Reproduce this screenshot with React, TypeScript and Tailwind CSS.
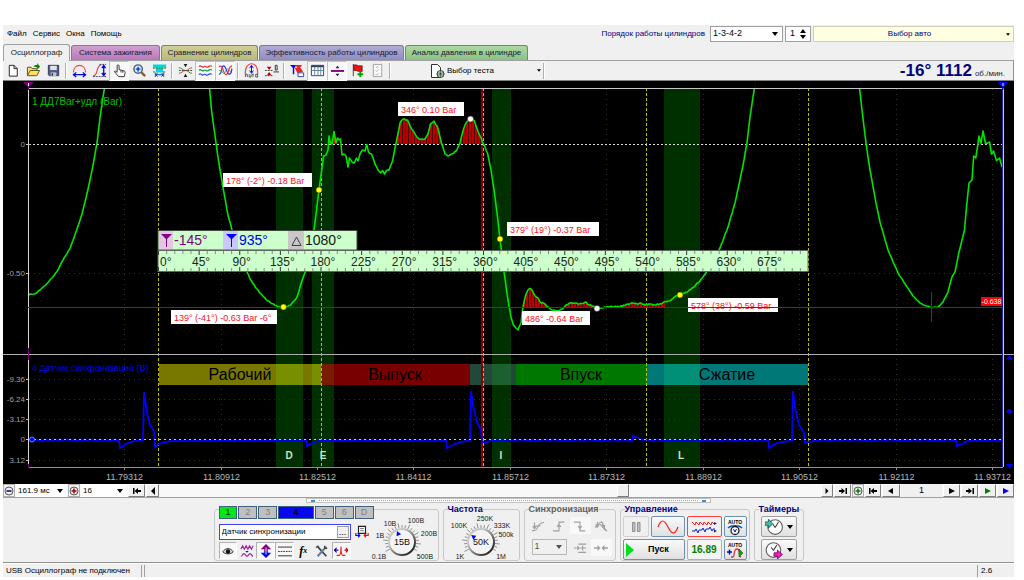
import type { ReactNode } from "react";

type Point = [number, number];

type Marker = {
  text: string;
  x: number;
  y: number;
  w: number;
};

// Pressure trace, three visible pieces
const pressureLeft: Point[] = [
  [28, 295.5], [30, 294], [34, 294], [37, 292.5], [42, 288], [47, 283.5], [52, 278], [57, 271.5], [63, 260], [70, 248.5],
  [76, 232], [82, 214], [86, 198], [90, 180], [94, 160], [97, 143], [100, 118], [102.5, 100], [104.5, 88],
];

const pressureMain: Point[] = [
  [209.5, 88], [211.5, 110], [216, 143], [220, 170], [224, 193], [228, 215], [232, 230], [238, 250], [247, 272], [250, 279],
  [257, 289], [262, 295], [266, 299.5], [270, 302], [275, 305.5], [280, 307.5], [286, 307.5], [290, 305.5], [294, 301],
  [297, 297], [300, 287], [303, 278], [305, 272], [310, 253], [314, 230], [316.5, 210], [319, 190], [321, 175],
  [322, 168], [323.5, 156], [326, 155], [328, 150], [329, 136], [330.5, 143], [332, 144], [334, 131.5], [336, 143],
  [337.5, 138], [339, 140], [340.5, 139], [342, 155], [344, 154], [346, 156], [348, 167], [349.5, 158], [352, 162],
  [354, 163], [356.5, 158], [358, 161], [360, 154], [362.5, 150], [365, 151], [366.7, 144.5], [368.5, 152], [371.5, 154],
  [375, 164], [378, 170], [380.5, 173], [382.5, 170.5], [384.5, 174], [386.5, 170.5], [389, 170], [392.5, 161],
  [395, 148], [397.5, 136], [400, 123], [403, 119], [407.5, 120], [411, 128], [414, 132], [417, 137], [420.5, 139.5],
  [425, 139], [428, 134], [430.5, 124], [434, 121], [437.5, 127], [441.5, 143], [445, 154], [448, 156], [452, 154],
  [456, 151], [460, 143], [463.5, 129], [466.5, 122], [470.5, 119], [474.5, 121], [477.5, 130], [483.5, 144],
  [487.5, 153], [491, 170], [495, 197], [497.5, 217], [500, 239], [504, 272], [508, 300], [511, 317], [513, 324],
  [516, 328], [518, 330], [519.5, 326], [521, 323], [522.5, 310], [524, 302], [526, 294], [528, 290], [530.5, 288.5],
  [533, 292], [535, 296], [538, 298], [541, 303], [544, 303.5], [548, 307], [552, 310], [558, 311], [562, 309],
  [565, 306], [570, 303], [574, 303], [578, 304], [582, 303.5], [586, 302], [589, 305], [593, 306], [597, 308],
  [602, 308], [608, 306.5], [614, 307], [620, 306.5], [626, 304.5], [633, 303], [637, 304], [641, 303], [645, 305],
  [650, 304], [655, 305], [661, 304], [665, 301.5], [669, 301], [673, 298.5], [676, 296], [680, 295], [687, 292],
  [693, 287.5], [700, 281], [706, 273], [720, 248], [728, 227], [735, 203], [740.5, 177], [744, 160], [747, 143],
  [750, 117], [754.5, 88],
];

const pressureRight: Point[] = [
  [859.5, 88], [862, 110], [866, 143], [870, 170], [876, 203], [880, 222], [888, 250], [898, 273], [907, 287],
  [913, 296], [920, 303], [925, 305.5], [932, 307.5], [938, 307], [943, 302], [948, 292], [952, 277], [955, 272],
  [959, 252], [962, 240], [964.5, 230], [966.5, 207], [969, 183], [972, 180], [973.7, 156], [975.7, 158], [977.5, 147],
  [979, 136], [981, 143.5], [983, 131], [985.5, 143.5], [989.5, 142], [991.5, 154], [993.5, 151], [996.5, 160.5],
  [999.5, 158], [1002, 167],
];

// Synchronisation sensor trace
const syncTrace: Point[] = [
  [32, 440], [119, 440], [120, 448], [125, 444.5], [132, 441.5], [143, 440], [144, 392], [147, 413], [150, 425],
  [154, 432], [155, 447], [160, 443.5], [170, 441], [306, 440], [307, 446], [313, 442.5], [320, 440.5], [446, 440],
  [447, 448], [455, 443.5], [470, 440], [471, 391], [473, 405], [477, 422], [481, 430], [482, 442.5], [489, 441.5],
  [492, 440], [632, 440], [633, 436], [639, 438.5], [645, 440], [768.5, 440], [769, 448], [777, 443], [792, 440],
  [793, 391], [795.5, 410], [799, 425], [804, 433], [805, 442.5], [813, 441], [820, 440], [956, 440], [957, 446],
  [964, 442.5], [970, 440.5], [1002, 440],
];

const markers: Marker[] = [
  { text: "346° 0.10 Bar", x: 398, y: 102, w: 66 },
  { text: "178° (-2°) -0.18 Bar", x: 223, y: 173, w: 89 },
  { text: "379° (19°) -0.37 Bar", x: 507, y: 222, w: 92 },
  { text: "139° (-41°) -0.63 Bar -6°", x: 171, y: 310, w: 106 },
  { text: "486° -0.64 Bar", x: 522, y: 311, w: 68 },
  { text: "578° (38°) -0.59 Bar", x: 688, y: 298, w: 90 },
];

const bands = [
  { x: 276, w: 27, name: "D", at: 289 },
  { x: 312, w: 22, name: "E", at: 323 },
  { x: 492, w: 19, name: "I", at: 501 },
  { x: 664, w: 36, name: "L", at: 681 },
];

const phases = [
  { x: 159, w: 162, fill: "#787800", name: "Рабочий", at: 240 },
  { x: 321, w: 149, fill: "#780000", name: "Выпуск", at: 395 },
  { x: 470, w: 46, fill: "#23483a", name: "", at: 0 },
  { x: 516, w: 131, fill: "#007800", name: "Впуск", at: 581 },
  { x: 647, w: 161, fill: "#007878", name: "Сжатие", at: 727 },
];

const overlaps = [
  { x: 276, w: 27, fill: "#789000" },
  { x: 312, w: 9, fill: "#789000" },
  { x: 321, w: 13, fill: "#781c00" },
  { x: 492, w: 19, fill: "#1c6030" },
  { x: 664, w: 36, fill: "#009078" },
];

const gridX = [124.5, 221.5, 317.5, 413.5, 510.5, 606.5, 703.5, 799.5, 896.5, 992.5];
const times = ["11.79312", "11.80912", "11.82512", "11.84112", "11.85712", "11.87312", "11.88912", "11.90512", "11.92112", "11.93712"];
const cycleX = [158.5, 321.5, 483.5, 646.5, 808.5];
const syncScale = [
  { label: "-9.36", y: 379 },
  { label: "-6.24", y: 399 },
  { label: "-3.12", y: 419 },
  { label: "0", y: 439 },
  { label: "3.12", y: 460 },
];

const toPath = (pts: Point[]) => pts.map(([x, y]) => `${x},${y}`).join(" ");

// Small repeatable ripple so that the lines look like sampled data
const ripple = (pts: Point[], amp: number, step: number): Point[] => {
  const out: Point[] = [];
  pts.forEach((p, i) => {
    out.push(p);
    const next = pts[i + 1];
    if (!next) return;
    const n = Math.floor((next[0] - p[0]) / step);
    for (let k = 1; k < n; k++) {
      const t = k / n;
      const noise = (((i * 37 + k * 61) % 17) / 8 - 1) * amp;
      out.push([p[0] + (next[0] - p[0]) * t, p[1] + (next[1] - p[1]) * t + noise]);
    }
  });
  return out;
};

// Area between the trace and a level, for x within the range
const area = (from: number, to: number, level: number) => {
  const pts = pressureMain.filter(([x, y]) => x >= from && x <= to && y <= level);
  return `${from},${level} ${toPath(pts)} ${to},${level}`;
};

function Chart() {
  return (
    <svg viewBox="3 81 1011 403" className="block h-auto w-full bg-black font-['Liberation_Sans',sans-serif]" role="img" aria-label="Осциллограмма">
      <defs>
        <pattern id="hatch" width="3" height="8" patternUnits="userSpaceOnUse">
          <rect width="3" height="8" fill="#b80000" />
          <rect width="1" height="8" fill="#500000" />
        </pattern>
      </defs>

      {bands.map((b) => (
        <rect key={b.name} x={b.x} y="89" width={b.w} height="378" fill="#003000" />
      ))}
      {gridX.map((x) => (
        <line key={x} x1={x} x2={x} y1="89" y2="467" stroke="#303010" strokeDasharray="1 4" />
      ))}
      <line x1="29" x2="1002" y1="273.5" y2="273.5" stroke="#303010" strokeDasharray="1 4" />
      {syncScale.map((s) => (
        <line key={s.label} x1="29" x2="1002" y1={s.y + 0.5} y2={s.y + 0.5} stroke="#303010" strokeDasharray="1 4" />
      ))}

      {/* phases of the cycle */}
      {phases.map((p) => (
        <rect key={p.x} x={p.x} y="364" width={p.w} height="21" fill={p.fill} />
      ))}
      {overlaps.map((o) => (
        <rect key={o.x} x={o.x} y="364" width={o.w} height="21" fill={o.fill} />
      ))}
      {phases.map((p) => (
        <text key={p.x} x={p.at} y="380" fontSize="16" textAnchor="middle" fill="#000">
          {p.name}
        </text>
      ))}

      <line x1="482" x2="482" y1="89" y2="467" stroke="#900000" strokeWidth="2" />
      {cycleX.map((x) => (
        <line key={x} x1={x} x2={x} y1="88" y2="467" stroke="#c0c000" strokeDasharray="3 2" />
      ))}
      <line x1="29" x2="1002" y1="144.5" y2="144.5" stroke="#e0e0e0" strokeDasharray="2 2" />

      {/* hatched areas */}
      <polygon points={area(396, 442, 144)} fill="url(#hatch)" />
      <polygon points={area(460, 483.5, 144)} fill="url(#hatch)" />
      <polygon points={area(523, 548, 307)} fill="url(#hatch)" />
      <polygon points={area(565, 593, 307)} fill="url(#hatch)" />
      <polygon points={area(614, 665, 307)} fill="url(#hatch)" />
      <rect x="333" y="135" width="2" height="9" fill="#e00000" />

      <g fill="none" stroke="#00e400" strokeWidth="1.6" strokeLinejoin="round">
        <polyline points={toPath(ripple(pressureLeft, 0.4, 1.5))} />
        <polyline points={toPath(ripple(pressureMain, 0.6, 1.2))} />
        <polyline points={toPath(ripple(pressureRight, 0.4, 1.5))} />
      </g>
      <text x="32" y="105" fontSize="10" fill="#00c000">
        1 ДД7Bar+удл (Bar)
      </text>

      {/* sensor channel */}
      <text x="32" y="371" fontSize="9" fill="#0000e0">
        4 Датчик синхронизации (В)
      </text>
      <polyline points={toPath(ripple(syncTrace, 0.6, 2))} fill="none" stroke="#0000ff" strokeWidth="1.8" />
      <line x1="29" x2="1002" y1="439.5" y2="439.5" stroke="#c8c8ff" strokeDasharray="2 3" />
      <circle cx="32" cy="439.5" r="2.5" fill="#0000ff" stroke="#6080ff" />

      {bands.map((b) => (
        <text key={b.name} x={b.at} y="459" fontSize="10" fontWeight="bold" textAnchor="middle" fill="#c8e6c8">
          {b.name}
        </text>
      ))}

      {/* frame and axes */}
      <path d="M28.5 88.5H1003" stroke="#c8c8c8" fill="none" />
      <path d="M28.5 88V467" stroke="#d8d8d8" />
      <path d="M3 354.5H1014" stroke="#b0b0b0" />
      <path d="M28 467.5H1003" stroke="#909090" />
      <path d="M28.5 348v12M28.5 464v4" stroke="#800080" />
      <path d="M1002.5 88V467" stroke="#2020c0" />
      <path d="M1003.5 88V467" stroke="#d0d0ff" />
      <path d="M26 144.5h5M26 273.5h3M26 379.5h3M26 399.5h3M26 419.5h3M26 439.5h3M26 460.5h3" stroke="#c8c8c8" />
      <g fontSize="8" textAnchor="end" fill="#a0a0a0">
        <text x="25" y="147">0</text>
        <text x="25" y="276">-0.50</text>
        {syncScale.map((s) => (
          <text key={s.label} x="25" y={s.y + 3}>
            {s.label}
          </text>
        ))}
      </g>
      {times.map((t, i) => (
        <g key={t}>
          <path d={`M${gridX[i]} 467v3`} stroke="#909090" />
          <text x={gridX[i]} y="480" fontSize="9" textAnchor="middle" fill="#b8b8b8">
            {t}
          </text>
        </g>
      ))}
      <path d="M23 82h11l-5 5v3h-1v-3z" fill="#800080" />
      <path d="M28.5 83v3" stroke="#fff" />
      <path d="M997.5 82h11l-5 5v3h-1v-3z" fill="#0000ff" />
      <path d="M1003 83v3" stroke="#fff" />
      <g fill="#0000ff">
        <path d="M1006 359.5l3.5-4.5 3.5 4.5z" />
        <path d="M1006 464h7l-3.5 4.5z" />
        <path d="M1006 411.5l3.5-3 3.5 3-3.5 3z" />
      </g>

      {/* degree ruler */}
      <rect x="158" y="230.5" width="199" height="19.5" fill="#ccffcc" stroke="#404840" />
      <rect x="159" y="231" width="14" height="18" fill="#e0c8e0" />
      <rect x="223" y="231" width="15" height="18" fill="#c8c8ff" />
      <rect x="288" y="231" width="16" height="18" fill="#c8c8c8" />
      <path d="M161 234h11l-5 5v8h-1v-8z" fill="#800080" />
      <path d="M226 234h11l-5 5v8h-1v-8z" fill="#0000ff" />
      <path d="M292 245.500h9l-4.500-8.500z" fill="none" stroke="#404040" />
      <g fontSize="14">
        <text x="174" y="245" fill="#800080">-145°</text>
        <text x="239" y="245" fill="#0000e0">935°</text>
        <text x="305" y="245" fill="#101810">1080°</text>
      </g>
      <rect x="158" y="250.5" width="650" height="21" fill="#ccffcc" stroke="#606860" />
      {Array.from({ length: 80 }, (_, i) => {
        const x = 158.5 + i * 8.125;
        const len = i % 5 === 0 ? 4 : 3;
        return <path key={i} d={`M${x} 251v${len}M${x} 271v${-len}`} stroke={i % 5 === 0 ? "#303830" : "#809080"} />;
      })}
      {Array.from({ length: 16 }, (_, i) => (
        <text key={i} x={i === 0 ? 160 : 160.5 + i * 40.6} y="266" fontSize="12" textAnchor={i === 0 ? "start" : "middle"} fill="#182818">
          {i * 45}°
        </text>
      ))}

      {/* measured points */}
      {markers.map((m) => (
        <g key={m.text}>
          <rect x={m.x} y={m.y} width={m.w} height="14" fill="#fff" />
          <text x={m.x + 3} y={m.y + 11} fontSize="9" fill="#ff1020">
            {m.text}
          </text>
        </g>
      ))}
      <path d="M28 307.5H1002" stroke="#c80000" />
      <path d="M931.5 292v30" stroke="#c80000" />
      <g stroke="#202000" strokeWidth="0.5">
        <circle cx="319" cy="190" r="3" fill="#ffff00" />
        <circle cx="283.5" cy="307" r="3" fill="#ffff00" />
        <circle cx="500" cy="239" r="3" fill="#ffff00" />
        <circle cx="680" cy="295" r="3" fill="#ffff00" />
        <circle cx="470.5" cy="119" r="3" fill="#fff" />
        <circle cx="597" cy="308.5" r="3" fill="#fff" />
      </g>
      <rect x="981" y="297" width="21" height="9" fill="#ff0000" />
      <text x="991.5" y="304" fontSize="7" textAnchor="middle" fill="#fff">
        -0.638
      </text>
    </svg>
  );
}

function Icon({ children, className = "size-4" }: { children: ReactNode; className?: string }) {
  return (
    <svg viewBox="0 0 16 16" className={`${className} shrink-0`} fill="none" aria-hidden="true">
      {children}
    </svg>
  );
}

function Tool({ label, pressed, children }: { label: string; pressed?: boolean; children: ReactNode }) {
  return (
    <button
      aria-label={label}
      className={`flex h-5 w-5 shrink-0 items-center justify-center border ${
        pressed ? "border-t-[#c0c0c0] border-r-white border-b-white border-l-[#c0c0c0] bg-[#f8f8f8]" : "border-transparent"
      }`}
    >
      <Icon className="size-[15px]">{children}</Icon>
    </button>
  );
}

const Separator = () => <span className="mx-[2px] h-4 w-[2px] shrink-0 border-l border-[#b0b0b0] bg-white" />;

type SelectProps = { id?: string; label?: string; value: string; box: string };

function Select({ id, label, value, box }: SelectProps) {
  return (
    <span className={`relative flex items-center ${box}`}>
      <select id={id} aria-label={label} className="h-full w-full appearance-none bg-transparent pl-[2px] outline-none">
        <option>{value}</option>
      </select>
      <svg viewBox="0 0 6 4" className="pointer-events-none absolute right-1 h-1 w-[6px]" aria-hidden="true">
        <path d="M0 0h6L3 4z" fill="currentColor" />
      </svg>
    </span>
  );
}

function Header() {
  return (
    <header className="flex h-[18px] items-center text-[8px]">
      <nav className="flex gap-[6px] pl-1">
        <button>Файл</button>
        <button>Сервис</button>
        <button>Окна</button>
        <button>Помощь</button>
      </nav>
      <label htmlFor="order" className="ml-auto pr-[5px] text-[#000080]">
        Порядок работы цилиндров
      </label>
      <Select id="order" value="1-3-4-2" box="h-4 w-[73px] border border-[#a0a0a0] bg-white text-[9px]" />
      <span className="ml-[2px] flex h-4 w-[26px] items-center border border-[#a0a0a0] bg-white text-[9px]">
        <input aria-label="Цилиндр" defaultValue="1" className="w-[14px] min-w-0 bg-transparent pl-1 outline-none" />
        <svg viewBox="0 0 6 10" className="h-[10px] w-[6px]" aria-hidden="true">
          <path d="M0 4h6L3 0zM0 6h6L3 10z" fill="#000" />
        </svg>
      </span>
      <button className="relative ml-[2px] h-4 w-[201px] border border-[#d0d0b8] bg-[#ffffe1] pr-2 text-[#000080]">
        Выбор авто
        <svg viewBox="0 0 6 4" className="absolute top-[6px] right-[3px] h-[3px] w-1" aria-hidden="true">
          <path d="M0 0h6L3 4z" fill="#000" />
        </svg>
      </button>
    </header>
  );
}

function Tabs() {
  const tab = "h-[15px] shrink-0 rounded-t-[3px] border border-b-0 border-[#808080] text-center";
  return (
    <div role="tablist" className="flex h-[17px] items-end gap-px text-[8px] text-[#181830]">
      <button role="tab" aria-selected="true" className="-mb-px h-[17px] w-[67px] shrink-0 rounded-t-[3px] border border-b-0 border-[#a0a0a0] bg-[#f0f0f0] text-center">
        Осциллограф
      </button>
      <button role="tab" aria-selected="false" className={`${tab} w-[89px] bg-linear-to-b from-[#d0a0d0] to-[#b878b8]`}>
        Система зажигания
      </button>
      <button role="tab" aria-selected="false" className={`${tab} w-[97px] bg-linear-to-b from-[#d0d098] to-[#b8b878]`}>
        Сравнение цилиндров
      </button>
      <button role="tab" aria-selected="false" className={`${tab} w-[145px] bg-linear-to-b from-[#b0acd4] to-[#908cc0]`}>
        Эффективность работы цилиндров
      </button>
      <button role="tab" aria-selected="false" className={`${tab} w-[123px] bg-linear-to-b from-[#acd8a4] to-[#8cc084]`}>
        Анализ давления в цилиндре
      </button>
    </div>
  );
}

function Toolbar() {
  return (
    <div className="flex h-[21px] items-center border-t border-r border-b border-t-[#a0a0a0] border-r-[#909090] border-b-[#808080] text-[8px]">
      <Tool label="Новый">
        <path d="M3.5 2.5h5l3.500 3.500v8H3.500z" fill="#fff" stroke="#202020" />
        <path d="M8.5 2.5v3.500h3.500" stroke="#202020" />
      </Tool>
      <Tool label="Открыть">
        <path d="M1.5 13V4.500h4l1 1.500h5v2" fill="#f0e080" stroke="#605010" />
        <path d="M1.5 13.500l3-5.500h10l-3 5.500z" fill="#ffe060" stroke="#605010" />
        <path d="M8 4c1-2 3-2.500 4-1.500V0l3 4-3 3V5c-1-1-2.500-1-4-1z" fill="#008000" />
      </Tool>
      <Tool label="Сохранить">
        <path d="M2.5 2.500h11v11h-10l-1-1z" fill="#506090" stroke="#303850" />
        <path d="M4.5 3h7v4.500h-7z" fill="#e0e4f0" />
        <path d="M5 10h6v4H5z" fill="#c0c0c0" />
        <path d="M6 11h1.500v2.500H6z" fill="#202840" />
      </Tool>
      <Separator />
      <Tool label="Масштаб по времени">
        <path d="M1.5 10C2 0 14 0 14.500 10" stroke="#f04040" strokeWidth="1.2" />
        <path d="M2 12.500h12M4.500 10l-3 2.500 3 2.500M11.500 10l3 2.500-3 2.500" stroke="#0000e0" strokeWidth="1.3" />
      </Tool>
      <Tool label="Масштаб по амплитуде">
        <path d="M1 14c6 0 3-12 9-12" stroke="#f04040" strokeWidth="1.2" />
        <path d="M8 1.500h7M1 14.500h14" stroke="#404080" strokeDasharray="2 1" />
        <path d="M12.5 3v10M10.500 5.500l2-3 2 3M10.500 10.500l2 3 2-3" stroke="#0000e0" strokeWidth="1.3" />
      </Tool>
      <Tool label="Рука" pressed>
        <path d="M5.5 10V3a1 1 0 012 0v4l5.500 1.500c1 .5 1 1 1 2L13 14.500H7L2.500 9c1-1 2 0 3 1zM9.500 8v2M11.500 8.500v2" fill="#fff" stroke="#303030" />
      </Tool>
      <Tool label="Лупа">
        <circle cx="6.5" cy="6.5" r="4.5" fill="#d8ecff" stroke="#505c78" strokeWidth="1.5" />
        <path d="M10 10l4 4" stroke="#806030" strokeWidth="2.5" />
        <path d="M4 6.500h5M6.500 4v5" stroke="#0040c0" strokeWidth="1.5" />
      </Tool>
      <Tool label="Измерения">
        <path d="M1 1.500h14v3.500H1zM4 5h8v5H4z" fill="#00d8e0" />
        <path d="M1 5.500h14M1 9.500h3M12 9.500h3" stroke="#606000" strokeDasharray="2 1" />
        <path d="M3.5 10v5M12.500 10v5" stroke="#0060a0" />
        <path d="M4 12.500h8M6 10.500l-2 2 2 2M10 10.500l2 2-2 2" stroke="#0030c0" />
      </Tool>
      <Separator />
      <Tool label="Привести к нулю">
        <path d="M1 5c3 0 4 3 7 3s4 3 7 3" stroke="#00a000" />
        <path d="M1 11c3 0 4-3 7-3s4-3 7-3" stroke="#e03030" />
        <path d="M1 8h14" stroke="#404040" strokeDasharray="2 1" />
        <path d="M6 1h4L8 4.500zM6 15h4l-2-3.500z" fill="#202020" />
      </Tool>
      <Tool label="Разделить каналы" pressed>
        <path d="M1 4c2-3 3 2 5 0s3 2 5 0 3 0 4-1" stroke="#f03030" strokeWidth="1.2" />
        <path d="M1 8c2-3 3 2 5 0s3 2 5 0 3 0 4-1" stroke="#00a040" strokeWidth="1.2" />
        <path d="M1 12.500c2-3 3 2 5 0s3 2 5 0 3 0 4-1" stroke="#2040ff" strokeWidth="1.2" />
      </Tool>
      <Tool label="Совместить каналы" pressed>
        <path d="M1 12c4 0 2-9 5-9s3 9 6 9 2-4 3-6" stroke="#2020ff" strokeWidth="1.2" />
        <path d="M1 4c3-2 4 1 5 5s4 5 5 0 2-5 4-6" stroke="#f03030" strokeWidth="1.2" />
        <path d="M1 8h3c1 4 3 4 4 1s3-3 4-2 1 3 3 3" stroke="#30a050" strokeWidth="0.8" />
      </Tool>
      <Separator />
      <Tool label="Автомасштаб">
        <path d="M1.5 12C0 -3 16 -3 14.500 12" stroke="#f04040" strokeWidth="1.2" />
        <path d="M8 3v7M6 5.500l2-3 2 3M6 8l2 3 2-3" stroke="#0000d0" />
        <path d="M1.5 15v-3h2v3M5.500 12v3h2v-3M8.500 12h2M9.500 12v3M12.500 12h2v3h-2z" stroke="#303030" strokeWidth="0.8" />
      </Tool>
      <Tool label="Уровень нуля">
        <path d="M1 8h9M1 13.500h9" stroke="#404040" strokeDasharray="2 1" />
        <path d="M3 4h5L5.500 7.500zM3 13h5L5.500 9.500z" fill="#c00000" />
        <path d="M12 2.500h2v5h-2z" stroke="#303030" />
        <path d="M10 9.500h6" stroke="#303030" />
      </Tool>
      <Separator />
      <Tool label="Маркер">
        <path d="M0 2h7L4 6zM3 5h1.500v7H3z" fill="#0000ff" />
        <path d="M5 2h8L9.500 6zM5 5l6 0 3 4-6 2z" fill="#f02020" />
        <path d="M8.5 10.500h6v4h-6z" fill="#fff" stroke="#4040a0" />
      </Tool>
      <Tool label="Таблица" pressed>
        <path d="M1.5 2.500h13v11h-13z" fill="#fff" stroke="#304060" />
        <path d="M1.5 3.500h13" stroke="#304060" strokeWidth="2" />
        <path d="M5 4v9.500M8.500 4v9.500M11.500 4v9.500M2 8h12" stroke="#6080a0" />
      </Tool>
      <Tool label="Линия" pressed>
        <path d="M1 8.500h14" stroke="#800080" strokeWidth="2" />
        <path d="M6 5.500h4L8 3zM6 11.500h4L8 14z" fill="#202020" />
      </Tool>
      <Tool label="Добавить флаг">
        <path d="M3.5 1v13" stroke="#404040" />
        <path d="M4 2h3l2 1h4v6H9L7 8H4z" fill="#f01010" stroke="#600000" strokeWidth="0.7" />
        <path d="M11 9v6M8 12h6" stroke="#00a000" strokeWidth="2" />
      </Tool>
      <Tool label="Отчёт">
        <path d="M3.5 1.500h9v13h-9z" fill="#fafafa" stroke="#a0a0a0" />
        <path d="M6 4l1 1 2-2M6 8l1 1 2-2M6 12l1 1 2-2" stroke="#a8a8a8" />
      </Tool>
      <Separator />
      <button className="ml-9 flex h-full w-[112px] items-center">
        <Icon>
          <path d="M2.5 1.500h6l3 3v10h-9z" fill="#fff" stroke="#303030" />
          <circle cx="11.5" cy="11" r="3.5" fill="#d8e8d8" stroke="#304830" />
          <path d="M11.5 7v8M7.500 11h8M9 8.500l5 5M14 8.500l-5 5" stroke="#304830" strokeWidth="0.7" />
        </Icon>
        <span className="pl-[2px]">Выбор теста</span>
        <svg viewBox="0 0 6 4" className="ml-auto h-[3px] w-1" aria-hidden="true">
          <path d="M0 0h6L3 4z" fill="#000" />
        </svg>
      </button>
      <Separator />
      <output className="ml-auto flex items-baseline gap-[3px] pr-2 text-[#000080]">
        <strong className="text-[17px] leading-5">-16° 1112</strong>
        <span className="text-[8px] text-[#202040]">об./мин.</span>
      </output>
    </div>
  );
}

function NavButton({ label, color = "text-black", size = "w-4", d }: { label: string; color?: string; size?: string; d: string }) {
  return (
    <button aria-label={label} className={`flex h-[13px] shrink-0 items-center justify-center border border-t-white border-r-[#808080] border-b-[#808080] border-l-white bg-[#f0f0f0] ${size} ${color}`}>
      <svg viewBox="0 0 10 8" className="h-2 w-[10px]" aria-hidden="true">
        <path d={d} fill="currentColor" />
      </svg>
    </button>
  );
}

function ZoomButton({ label, color, plus }: { label: string; color: string; plus?: boolean }) {
  return (
    <button aria-label={label} className="flex h-[13px] w-3 shrink-0 items-center justify-center border border-[#b0b0b0] bg-[#f0f0f0]">
      <svg viewBox="0 0 10 10" className="size-[10px] shrink-0" fill="none" aria-hidden="true">
        <circle cx="5" cy="5" r="4" stroke="#303030" strokeWidth="0.8" />
        <path d={plus ? "M2.5 5h5M5 2.500v5" : "M2.5 5h5"} stroke={color} strokeWidth="1.5" />
      </svg>
    </button>
  );
}

function NavBar() {
  return (
    <div className="flex h-[14px] items-center gap-px border-b border-[#a0a0a0] bg-[#f8f8f8] text-[8px]">
      <ZoomButton label="Уменьшить" color="#000080" />
      <Select label="Длительность" value="161.9 мс" box="h-[13px] w-[51px] bg-white" />
      <ZoomButton label="Увеличить" color="#a00000" plus />
      <Select label="Масштаб" value="16" box="h-[13px] w-[46px] bg-white" />
      <NavButton label="В начало" size="w-[17px]" d="M1 1h1.500v6H1zM6 1v6L2.500 4zM9 3v2H6V3z" />
      <NavButton label="Назад" size="w-[13px]" d="M7 0v8L3 4z" />
      <div className="flex h-full flex-1 justify-end">
        <span className="mr-[191px] h-[13px] w-3 border border-t-white border-r-[#808080] border-b-[#808080] border-l-white bg-[#f0f0f0]" />
      </div>
      <NavButton label="Вперёд" size="w-3" d="M3.5 1v6l3-3z" />
      <NavButton label="В конец" size="w-[17px]" d="M7.5 1H9v6H7.500zM3.500 1v6L7 4zM1 3v2h3V3z" />
      <ZoomButton label="Добавить" color="#008000" plus />
      <NavButton label="Первый кадр" size="w-4" d="M1 1h1.500v6H1zM6 1v6L2.500 4zM9 3v2H6V3z" />
      <NavButton label="Предыдущий кадр" size="w-[18px]" d="M7 1v6L2 4z" />
      <span className="w-[41px] bg-[#f0f0f0] text-center text-[9px] leading-[13px]">1</span>
      <NavButton label="Следующий кадр" size="w-[17px]" d="M2 1v6l6-3z" />
      <NavButton label="Последний кадр" size="w-[17px]" d="M7.5 1H9v6H7.500zM3.500 1v6L7 4zM1 3v2h3V3z" />
      <NavButton label="Воспроизвести" size="w-[17px]" color="text-[#008000]" d="M2 1v6l6-3z" />
      <NavButton label="Далее" size="w-[17px]" color="text-[#0000ff]" d="M2 1v6l6-3z" />
    </div>
  );
}

type KnobProps = {
  value: string;
  angle: number;
  cx: number;
  width: number;
  labels: { text: string; x: number; y: number }[];
};

// Rotary switch; the pointer angle is in degrees from the top
function Knob({ value, angle, cx, width, labels }: KnobProps) {
  return (
    <svg viewBox={`0 0 ${width} 47`} className="h-[47px] w-auto shrink-0 overflow-visible" role="img" aria-label={value}>
      <defs>
        <linearGradient id={`rim${cx}`} x1="0" y1="0" x2="1" y2="1">
          <stop offset="0.3" stopColor="#c8c8c8" />
          <stop offset="1" stopColor="#000" />
        </linearGradient>
      </defs>
      {Array.from({ length: 21 }, (_, i) => (
        <path key={i} d={`M${cx} ${i % 3 === 0 ? 9 : 11}v${i % 3 === 0 ? 5 : 3}`} stroke="#808080" strokeWidth="0.8" transform={`rotate(${-120 + i * 12} ${cx} 28)`} />
      ))}
      <circle cx={cx} cy="28" r="13" fill="#f4f4f4" stroke={`url(#rim${cx})`} strokeWidth="2" />
      <path d={`M${cx} 16l-2.5 4.5h5z`} fill="#0000ff" transform={`rotate(${angle} ${cx} 28)`} />
      <text x={cx} y="31" fontSize="9" textAnchor="middle" fill="#101010">
        {value}
      </text>
      {labels.map((l) => (
        <text key={l.text} x={l.x} y={l.y} fontSize="7" textAnchor="middle" fill="#202020">
          {l.text}
        </text>
      ))}
    </svg>
  );
}

function Group({ title, color = "text-[#000080]", children }: { title: string; color?: string; children: ReactNode }) {
  return (
    <fieldset className="min-w-0 shrink-0 rounded-[3px] border border-[#c8c8c8] px-[2px]">
      <legend className={`ml-[2px] text-[9px] leading-[9px] font-bold ${color}`}>{title}</legend>
      {children}
    </fieldset>
  );
}

function ChannelGroup() {
  const channel = "h-[13px] w-[19px] border border-[#406080] bg-[#c0c0c0] text-[#808080]";
  const tool = "flex h-[17px] w-[19px] items-center justify-center border";
  const down = "border-t-[#b0b0b0] border-r-white border-b-white border-l-[#b0b0b0] bg-[#f8f8f8]";
  return (
    <div role="group" aria-label="Канал" className="mt-1 flex shrink-0 rounded-[3px] border border-[#c8c8c8] pl-1">
      <div className="-mt-1 flex w-[155px] flex-col">
        <div className="flex gap-px bg-[#f0f0f0] text-[9px] leading-[11px]">
          <button className="h-[13px] w-[19px] border border-[#406080] bg-[#00e818] text-[#003000]">1</button>
          <button className={channel}>2</button>
          <button className={channel}>3</button>
          <button className="h-[13px] w-9 border border-[#406080] bg-[#0808f0] font-bold text-black">4</button>
          <button className={channel}>5</button>
          <button className={channel}>6</button>
          <button className={channel}>D</button>
        </div>
        <div className="mt-[5px] flex items-center gap-1">
          <div className="flex h-4 w-[132px] items-center border border-[#4040ff] bg-white pr-px">
            <input aria-label="Имя канала" defaultValue="Датчик синхронизации" className="min-w-0 flex-1 bg-transparent pl-[2px] text-[8px] outline-none" />
            <button aria-label="Выбрать датчик" className="h-3 w-3 border border-[#a0a0a0] bg-[#f0f0f0] text-[9px] leading-[5px]">
              ...
            </button>
          </div>
          <button aria-label="Сменить датчик">
            <Icon className="size-[14px]">
              <path d="M4 1.500h8v8H4zM3 9.500h10" fill="#fff" stroke="#202020" strokeWidth="1.3" />
              <path d="M6 4h4M6 6.500h4" stroke="#606060" />
              <path d="M1 9v3h4M3.500 10l2 2-2 2" stroke="#0000ff" strokeWidth="1.3" />
              <path d="M15 9v3h-4M12.500 10l-2 2 2 2" stroke="#ff0000" strokeWidth="1.3" />
            </Icon>
          </button>
        </div>
        <div className="mt-[2px] flex w-[132px] justify-between">
          <button aria-label="Показать" className={`${tool} ${down}`}>
            <Icon className="size-[14px]">
              <path d="M2 9c3-5 9-5 12 0-3 3-9 3-12 0z" fill="#e0e0e0" stroke="#202020" />
              <circle cx="8" cy="8.5" r="2.5" fill="#101010" />
            </Icon>
          </button>
          <button aria-label="Фильтр" className={`${tool} border-transparent`}>
            <Icon className="size-[14px]">
              <path d="M1 6l2-4 2 4 2-4 2 4 2-4 2 4 2-4" stroke="#a020a0" strokeWidth="1.3" />
              <path d="M6 8h4l-2 2z" fill="#202020" />
              <path d="M1 14c2 0 2-3 3.500-3s2 3 3.500 3 2-3 3.500-3 2 3 3.500 3" stroke="#a020a0" strokeWidth="1.3" />
            </Icon>
          </button>
          <button aria-label="Инвертировать" className={`${tool} ${down}`}>
            <Icon className="size-[14px]">
              <path d="M8 0l6 6h-4v2H6V6H2z" fill="#800080" />
              <path d="M8 16l6-6h-4V8H6v2H2z" fill="#0000f0" />
              <path d="M8 4v8" stroke="#fff" />
            </Icon>
          </button>
          <button aria-label="Уровни" className={`${tool} ${down}`}>
            <Icon className="size-[14px]">
              <path d="M0 3.500h16M0 13.500h16" stroke="#202020" />
              <path d="M0 8.500h16" stroke="#202020" strokeDasharray="2 1" />
            </Icon>
          </button>
          <button aria-label="Функция" className={`${tool} border-transparent font-['Liberation_Serif',serif] text-[12px] leading-none font-bold italic`}>
            f<span className="text-[8px]">x</span>
          </button>
          <button aria-label="Настройка" className={`${tool} border-transparent`}>
            <Icon className="size-[14px]">
              <path d="M3 3l10 11" stroke="#404040" strokeWidth="2" />
              <path d="M13 3L3 14" stroke="#6080a0" strokeWidth="2.5" />
              <path d="M1 4l3-2M11 2v3h3" stroke="#404040" strokeWidth="1.5" />
            </Icon>
          </button>
          <button aria-label="Сдвиг" className={`${tool} ${down}`}>
            <Icon className="size-[14px]">
              <path d="M0 7h5M3 4.500L0.500 7 3 9.500" stroke="#0000c0" strokeWidth="1.3" />
              <path d="M16 7h-4M13.500 4.500L16 7l-2.500 2.500" stroke="#c00000" strokeWidth="1.3" />
              <path d="M3 13h3c2 0 1.500-4 2-10 .5 6 0 10 2 10h3" stroke="#f02020" strokeWidth="1.2" />
            </Icon>
          </button>
        </div>
      </div>
      <div className="pt-1">
        <Knob
          value="15В"
          angle={-25}
          cx={28}
          width={64}
          labels={[
            { text: "10В", x: 16, y: 12 },
            { text: "100В", x: 42, y: 9 },
            { text: "1В", x: 6, y: 24 },
            { text: "200В", x: 55, y: 22 },
            { text: "0.1В", x: 5, y: 45 },
            { text: "500В", x: 51, y: 45 },
          ]}
        />
      </div>
    </div>
  );
}

function SyncGroup() {
  const btn = "flex h-[17px] w-[21px] items-center justify-center";
  return (
    <Group title="Синхронизация" color="text-[#606060]">
      <div className="grid grid-cols-4 gap-y-[5px] px-px pt-[3px]">
        <button disabled aria-label="Любой фронт" className={btn}>
          <Icon className="size-[14px]">
            <path d="M1 13c9 2 4-9 14-9M4 4v7M2 8l2 3 2-3M5 8h6" stroke="#a0a0a0" strokeWidth="1.3" />
          </Icon>
        </button>
        <button disabled aria-label="Передний фронт" className={btn}>
          <Icon className="size-[14px]">
            <path d="M1 13.500h7v-10h6M8 6v4M6 9l2-3 2 3" stroke="#a0a0a0" strokeWidth="1.3" />
          </Icon>
        </button>
        <button disabled aria-label="Задний фронт" className={`${btn} bg-[#f8f8f8]`}>
          <Icon className="size-[14px]">
            <path d="M1 3.500h7v10h6M8 6v5M6 8l2 3 2-3" stroke="#a0a0a0" strokeWidth="1.3" />
          </Icon>
        </button>
        <button disabled aria-label="Отключить" className={btn}>
          <Icon className="size-[14px]">
            <path d="M1 9c5 0 4-6 8-6M4 3v6M2 6l2 3 2-3M8 3c4 2 2 8 7 11M7 6l6 7" stroke="#a0a0a0" strokeWidth="1.3" />
            <path d="M8 6l5 1-1 5z" fill="#a0a0a0" />
          </Icon>
        </button>
        <div className="col-span-2 flex pl-1">
          <Select label="Канал синхронизации" value="1" box="h-4 w-[35px] border border-[#b8b8b8] text-[9px] text-[#505050]" />
        </div>
        <button disabled aria-label="Уровень" className={btn}>
          <Icon className="size-[14px]">
            <path d="M1 8h6M5 6l2 2-2 2M6 3.500h9M8 8h7M6 13h9M11 5v6" stroke="#a0a0a0" strokeWidth="1.3" />
          </Icon>
        </button>
        <button disabled aria-label="Задержка" className={`${btn} bg-[#f8f8f8]`}>
          <Icon className="size-[14px]">
            <path d="M0 8h5M16 8h-5" stroke="#a0a0a0" strokeWidth="1.6" />
            <path d="M4 4.500L7.500 8 4 11.500zM12 4.500L8.500 8l3.500 3.500z" fill="#a0a0a0" />
          </Icon>
        </button>
      </div>
    </Group>
  );
}

function ControlGroup() {
  const btn = "flex items-center justify-center rounded-[2px] border border-[#7090b0] bg-linear-to-b from-[#fafafa] to-[#e0e0e0]";
  return (
    <Group title="Управление">
      <div className="grid auto-rows-[21px] grid-cols-[26px_34px_35px_23px] gap-[2px] pt-[2px] font-bold">
        <button disabled aria-label="Пауза" className="flex items-center justify-center rounded-[2px] border border-[#d0d0d0]">
          <Icon>
            <path d="M4.5 3.500h2.500v9H4.500zM9.500 3.500H12v9H9.500z" fill="#c0c0c0" stroke="#909090" />
          </Icon>
        </button>
        <button aria-label="Один сигнал" className={btn}>
          <svg viewBox="0 0 24 16" className="h-4 w-6" fill="none" aria-hidden="true">
            <path d="M2 8C5 0 8 0 12 8s7 8 10 0" stroke="#f02020" strokeWidth="1.2" />
          </svg>
        </button>
        <button aria-label="Непрерывно" className="flex items-center justify-center rounded-[2px] border border-[#ff4040] bg-[#f0f0f0]">
          <svg viewBox="0 0 26 16" className="h-4 w-[26px]" fill="none" aria-hidden="true">
            <path d="M1 3l3 3 1-3 3 3 1-3 3 3 1-3 3 3 1-3 3 3 1-3 2 2" stroke="#f02020" />
            <path d="M1 12h3l1-2 2 4 1-3h3l1-2 2 4 1-3h3l1-2 2 4 1-2h2" stroke="#1020e0" />
            <path d="M23 3l3 1.500-3 1.500zM23 10.500l3 1.500-3 1.500z" fill="#202080" />
          </svg>
        </button>
        <button aria-label="Авто масштаб" className={btn}>
          <svg viewBox="0 0 18 18" className="size-[18px] font-['Liberation_Sans',sans-serif]" fill="none" aria-hidden="true">
            <text x="9" y="6" fontSize="5" textAnchor="middle" fill="#000">AUTO</text>
            <path d="M2 10c3-3 11-3 14 0" stroke="#0060d0" strokeWidth="1.5" />
            <circle cx="9" cy="12.5" r="4" fill="#fff" stroke="#202020" strokeWidth="1.3" />
            <path d="M7.5 11l1.500 3 1.500-3" stroke="#0000e0" />
          </svg>
        </button>
        <button className={`${btn} col-span-2 gap-[14px] pr-3 text-[9px]`}>
          <svg viewBox="0 0 8 14" className="h-[14px] w-2" aria-hidden="true">
            <path d="M0 0l8 7-8 7z" fill="#00e020" />
          </svg>
          Пуск
        </button>
        <output className="flex items-center justify-center rounded-[2px] border border-[#90b8e0] bg-[#f4f4f4] text-[10px] text-[#008000]">16.89</output>
        <button aria-label="Авто запуск" className={btn}>
          <svg viewBox="0 0 18 18" className="size-[18px] font-['Liberation_Sans',sans-serif]" fill="none" aria-hidden="true">
            <text x="9" y="6" fontSize="5" textAnchor="middle" fill="#000">AUTO</text>
            <path d="M5 16h2c2 0 0-8 4-8s1 8 4 8" stroke="#c04040" strokeWidth="1.3" />
            <path d="M1 11h5M3.500 8.500v5" stroke="#0000e0" strokeWidth="1.5" />
            <path d="M13 8l4 4-4 4z" fill="#00b000" stroke="#004000" strokeWidth="0.5" />
          </svg>
        </button>
      </div>
    </Group>
  );
}

function TimerGroup() {
  const btn = "flex h-[21px] w-9 items-center justify-center gap-1 rounded-[2px] border border-[#a0a0a0] bg-linear-to-b from-[#fafafa] to-[#e0e0e0]";
  return (
    <Group title="Таймеры">
      <div className="flex flex-col gap-[2px] px-1 pt-[2px]">
        <button aria-label="Таймер запуска" className={btn}>
          <Icon className="size-[18px]">
            <circle cx="9" cy="8" r="6.5" fill="#fff" stroke="#606060" />
            <path d="M9 8.500l-2-3M9 8.500l3-5" stroke="#404040" />
            <path d="M0 3.500h3V1l4 4-4 4V6.500H0z" fill="#40c0b0" stroke="#105050" strokeWidth="0.7" />
          </Icon>
          <svg viewBox="0 0 6 4" className="h-1 w-[6px]" aria-hidden="true">
            <path d="M0 0h6L3 4z" fill="#000" />
          </svg>
        </button>
        <button aria-label="Таймер остановки" className={btn}>
          <Icon className="size-[18px]">
            <circle cx="7.5" cy="8" r="6.5" fill="#fff" stroke="#606060" />
            <path d="M7.5 8.500l-2-3M7.500 8.500l3-5" stroke="#404040" />
            <path d="M8 10.500h3V8l4.500 4-4.500 4v-2.500H8z" fill="#f020c0" stroke="#600050" strokeWidth="0.7" />
          </Icon>
          <svg viewBox="0 0 6 4" className="h-1 w-[6px]" aria-hidden="true">
            <path d="M0 0h6L3 4z" fill="#000" />
          </svg>
        </button>
      </div>
    </Group>
  );
}

export default function App() {
  return (
    <div className="bg-white pt-[25px] pr-[10px] pl-[3px] font-['Liberation_Sans',sans-serif] text-black">
      <div className="bg-[#f0f0f0] whitespace-nowrap">
        <Header />
        <Tabs />
        <Toolbar />
        <Chart />
        <NavBar />
        <div className="flex h-[5px] justify-center">
          <div className="flex h-[5px] w-[405px] items-center justify-between border border-[#c0c0c0] bg-white px-1">
            <span className="h-[2px] w-1 bg-[#3090f0]" />
            <span className="mx-1 flex-1 border-t border-dotted border-[#70a8e0]" />
            <span className="h-[2px] w-1 bg-[#3090f0]" />
          </div>
        </div>
        <div className="flex h-[60px] items-stretch justify-center gap-1 border-b border-[#909090] pt-[2px] pb-px">
          <ChannelGroup />
          <Group title="Частота">
            <Knob
              value="50K"
              angle={-55}
              cx={35}
              width={71}
              labels={[
                { text: "100K", x: 13, y: 14 },
                { text: "250K", x: 39, y: 7 },
                { text: "333K", x: 56, y: 14 },
                { text: "500k", x: 60, y: 23 },
                { text: "1K", x: 14, y: 45 },
                { text: "1M", x: 55, y: 45 },
              ]}
            />
          </Group>
          <SyncGroup />
          <ControlGroup />
          <TimerGroup />
        </div>
        <footer className="flex h-[14px] items-center border-t border-white text-[8px]">
          <span className="w-[139px] border-r border-[#a0a0a0] pl-[3px] leading-3">USB Осциллограф не подключен</span>
          <span className="ml-[2px] h-3 flex-1 border-r border-l border-[#a0a0a0]" />
          <span className="w-9 pl-[3px] leading-3">2.6</span>
        </footer>
      </div>
    </div>
  );
}
